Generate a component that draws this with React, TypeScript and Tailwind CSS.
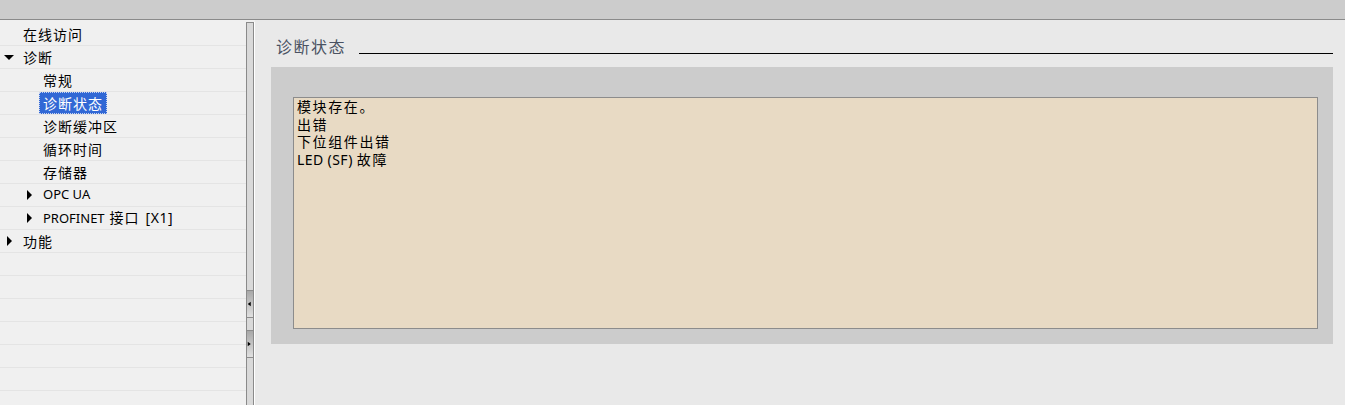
import React from "react";

const cjk = { fontFamily: '"Noto Sans CJK SC", "Noto Sans", sans-serif' };
const latin = { fontFamily: '"Noto Sans", "Noto Sans CJK SC", sans-serif' };

type Row = {
    level: number;
    arrow?: "down" | "right";
    label?: React.ReactNode;
    selected?: boolean;
};

const rows: Row[] = [
    { level: 0, label: "在线访问" },
    { level: 0, arrow: "down", label: "诊断" },
    { level: 1, label: "常规" },
    { level: 1, label: "诊断状态", selected: true },
    { level: 1, label: "诊断缓冲区" },
    { level: 1, label: "循环时间" },
    { level: 1, label: "存储器" },
    {
        level: 1,
        arrow: "right",
        label: (
            <span style={latin} className="text-[13px] tracking-normal">
                OPC UA
            </span>
        ),
    },
    {
        level: 1,
        arrow: "right",
        label: (
            <span className="tracking-normal">
                <span style={latin} className="text-[13px]">PROFINET</span>
                <span style={cjk} className="ml-[5px] tracking-[1px]">接口</span>
                <span style={latin} className="ml-[6px] text-[14px] tracking-[0.5px]">[X1]</span>
            </span>
        ),
    },
    { level: 0, arrow: "right", label: "功能" },
    { level: 0 },
    { level: 0 },
    { level: 0 },
    { level: 0 },
    { level: 0 },
    { level: 0 },
    { level: 0 },
];

function Arrow({ dir }: { dir?: "down" | "right" }) {
    return (
        <svg width="23" height="22" viewBox="0 0 23 22" className="shrink-0">
            {dir === "down" && <polygon points="4,9 14,9 9,14" fill="#000" />}
            {dir === "right" && <polygon points="7,6 12,11 7,16" fill="#000" />}
        </svg>
    );
}

function TreeRow({ row }: { row: Row }) {
    return (
        <div className="h-[23px] border-b border-[#e4e4e4] flex items-center shrink-0" style={{ paddingLeft: row.level * 20 }}>
            <Arrow dir={row.arrow} />
            {row.label && (
                <div
                    style={cjk}
                    className={
                        row.selected
                            ? "-ml-[4px] h-[22px] px-[4px] flex items-center bg-[#3168d5] text-white text-[14px] tracking-[1px] outline-1 outline-dotted -outline-offset-1 outline-[#c8d4f0]"
                            : "h-[22px] flex items-center text-black text-[14px] tracking-[1px]"
                    }
                >
                    {row.label}
                </div>
            )}
        </div>
    );
}

function SplitButton({ dir }: { dir: "left" | "right" }) {
    return (
        <div className="h-[28px] border-y border-[#8c8c8c] bg-gradient-to-b from-[#a8a8a8] to-[#e0e0e0] flex items-center">
            <svg width="8" height="10" viewBox="0 0 8 10">
                {dir === "left" ? <polygon points="5,2 1,5 5,8" fill="#000" /> : <polygon points="1,2 5,5 1,8" fill="#000" />}
            </svg>
        </div>
    );
}

export default function App() {
    return (
        <div className="w-[1345px] h-[405px] overflow-hidden flex flex-col bg-[#e9e9e9]" style={cjk}>
            <div className="h-[20px] shrink-0 bg-[#cccccc] border-b border-[#8a8a8a]" />
            <div className="flex flex-1 min-h-0">
                <div className="w-[246px] shrink-0 bg-[#f0f0f0] pt-[3px] flex flex-col overflow-hidden">
                    {rows.map((r, i) => (
                        <TreeRow key={i} row={r} />
                    ))}
                </div>
                <div className="w-[9px] shrink-0 bg-[#f0f0f0] pt-[2px] flex">
                    <div className="w-[8px] border border-b-0 border-[#8a8a8a] bg-[#d9d9d9] flex flex-col">
                        <div className="h-[267px]" />
                        <SplitButton dir="left" />
                        <div className="h-[12px]" />
                        <SplitButton dir="right" />
                    </div>
                    <div className="w-px bg-white" />
                </div>
                <div className="flex-1 flex flex-col pl-[16px] pr-[12px]">
                    <div className="flex items-end h-[22px] mt-[15px] pl-[5px]">
                        <span className="text-[16px] leading-[22px] tracking-[1.5px] text-[#4a5262]">诊断状态</span>
                        <div className="flex-1 h-px bg-black mb-[3px] ml-[13px]" />
                    </div>
                    <div className="mt-[10px] h-[277px] bg-[#cccccc] pt-[30px] pl-[22px] pr-[15px] pb-[15px] flex">
                        <div className="flex-1 border border-[#8c8c8c] bg-[#e8dac4] pl-[3px] text-[14px] leading-[17.5px] tracking-[1.6px] text-black">
                            <div>模块存在。</div>
                            <div>出错</div>
                            <div>下位组件出错</div>
                            <div>
                                <span style={latin} className="text-[14px] tracking-[0.4px]">LED (SF) </span>故障
                            </div>
                        </div>
                    </div>
                </div>
            </div>
        </div>
    );
}
